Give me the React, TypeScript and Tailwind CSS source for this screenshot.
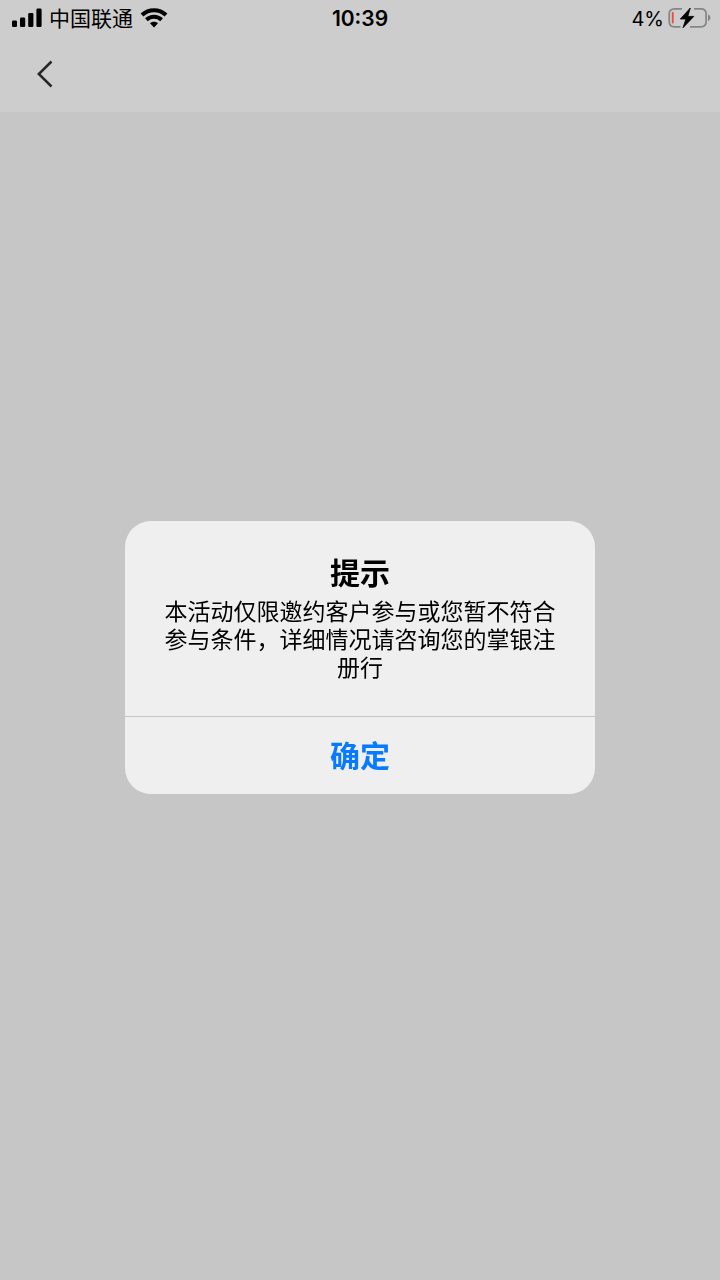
import { useState } from 'react';

const SignalIcon = () => (
  <svg width="33" height="20" viewBox="-3 0 33 20" fill="#000" aria-hidden="true">
    <rect x="0" y="12.5" width="5" height="6.5" rx="1.3" />
    <rect x="8" y="9.5" width="5.2" height="9.5" rx="1.3" />
    <rect x="16.2" y="5" width="5.2" height="14" rx="1.3" />
    <rect x="24.4" y="0.5" width="5.2" height="18.5" rx="1.3" />
  </svg>
);

const WifiIcon = () => (
  <svg width="28" height="20" viewBox="0 0 28 20" fill="none" stroke="#000" strokeWidth="4" aria-hidden="true">
    <path d="M2 7C8.8 0.5 19.2 0.5 26 7" />
    <path d="M6.4 11.8c4.4-4 10.8-4 15.2 0" />
    <path d="M14 19.4l-4-4.1c2.3-2 5.7-2 8 0z" fill="#000" stroke="none" />
  </svg>
);

const BatteryIcon = () => (
  <svg width="43" height="22" viewBox="0 0 43 22" fill="none" aria-hidden="true">
    <path
      d="M14 1.8H6.5C3.2 1.8 1.2 3.7 1.2 6.8v8c0 3.1 2 5 5.3 5h6M26 1.8h6.8c3.3 0 5.3 1.9 5.3 5v8c0 3.1-2 5-5.3 5H22"
      stroke="#858585"
      strokeWidth="1.7"
    />
    <path d="M40 7.6c1.5 0.5 2.4 1.7 2.4 3.2S41.5 13.5 40 14z" fill="#858585" />
    <rect x="3.8" y="5" width="1.9" height="11.5" rx="0.9" fill="#ef4a44" />
    <path d="M22.3 1L12.3 12h5.6L15 20.8 25.8 9.4h-6z" fill="#000" stroke="#000" strokeWidth="0.8" strokeLinejoin="round" />
  </svg>
);

const StatusBar = () => (
  <div className="grid h-9 grid-cols-3 items-center px-[9px] text-black">
    <div className="flex items-center gap-[7px]">
      <SignalIcon />
      <span className="pb-0.5 text-[21px] leading-7">中国联通</span>
      <WifiIcon />
    </div>
    <div className="pt-0.5 text-center font-['Inter','Noto_Sans_CJK_SC',sans-serif] text-[21px] font-semibold leading-7">
      10:39
    </div>
    <div className="flex items-center justify-end gap-1">
      <span className="pt-0.5 font-['Inter','Noto_Sans_CJK_SC',sans-serif] text-[20px] leading-7">4%</span>
      <BatteryIcon />
    </div>
  </div>
);

const App = () => {
  const [open, setOpen] = useState(true);

  return (
    <div className="min-h-screen bg-[#c6c6c6] font-['Noto_Sans_CJK_SC',sans-serif]">
      <header className="bg-[#cdcdcd]">
        <StatusBar />
        <nav className="flex h-19 items-center px-[30px]">
          <button type="button" aria-label="返回" className="flex h-10 w-7 items-center justify-center">
            <svg width="18" height="30" viewBox="0 0 18 30" fill="none" stroke="#262626" strokeWidth="2.5" aria-hidden="true">
              <path d="M16.5 2.5L3.8 15l12.7 12.5" />
            </svg>
          </button>
        </nav>
      </header>

      {open && (
        <div className="fixed inset-0 flex items-center justify-center px-4 pt-[34px]">
          <div
            role="alertdialog"
            aria-modal="true"
            aria-labelledby="alert-title"
            aria-describedby="alert-message"
            className="w-full max-w-[470px] overflow-hidden rounded-[26px] bg-[#efefef] text-center"
          >
            <div className="px-9 pb-9 pt-7">
              <h1 id="alert-title" className="mb-[3px] text-[30px] font-bold leading-11 text-black">
                提示
              </h1>
              <p id="alert-message" className="text-[23px] leading-7 text-black">
                本活动仅限邀约客户参与或您暂不符合参与条件，详细情况请咨询您的掌银注册行
              </p>
            </div>
            <button
              type="button"
              onClick={() => setOpen(false)}
              className="h-[78px] w-full border-t border-[#c4c4c4] pb-0.5 text-[30px] font-bold leading-10 text-[#087aff]"
            >
              确定
            </button>
          </div>
        </div>
      )}
    </div>
  );
};

export default App;
